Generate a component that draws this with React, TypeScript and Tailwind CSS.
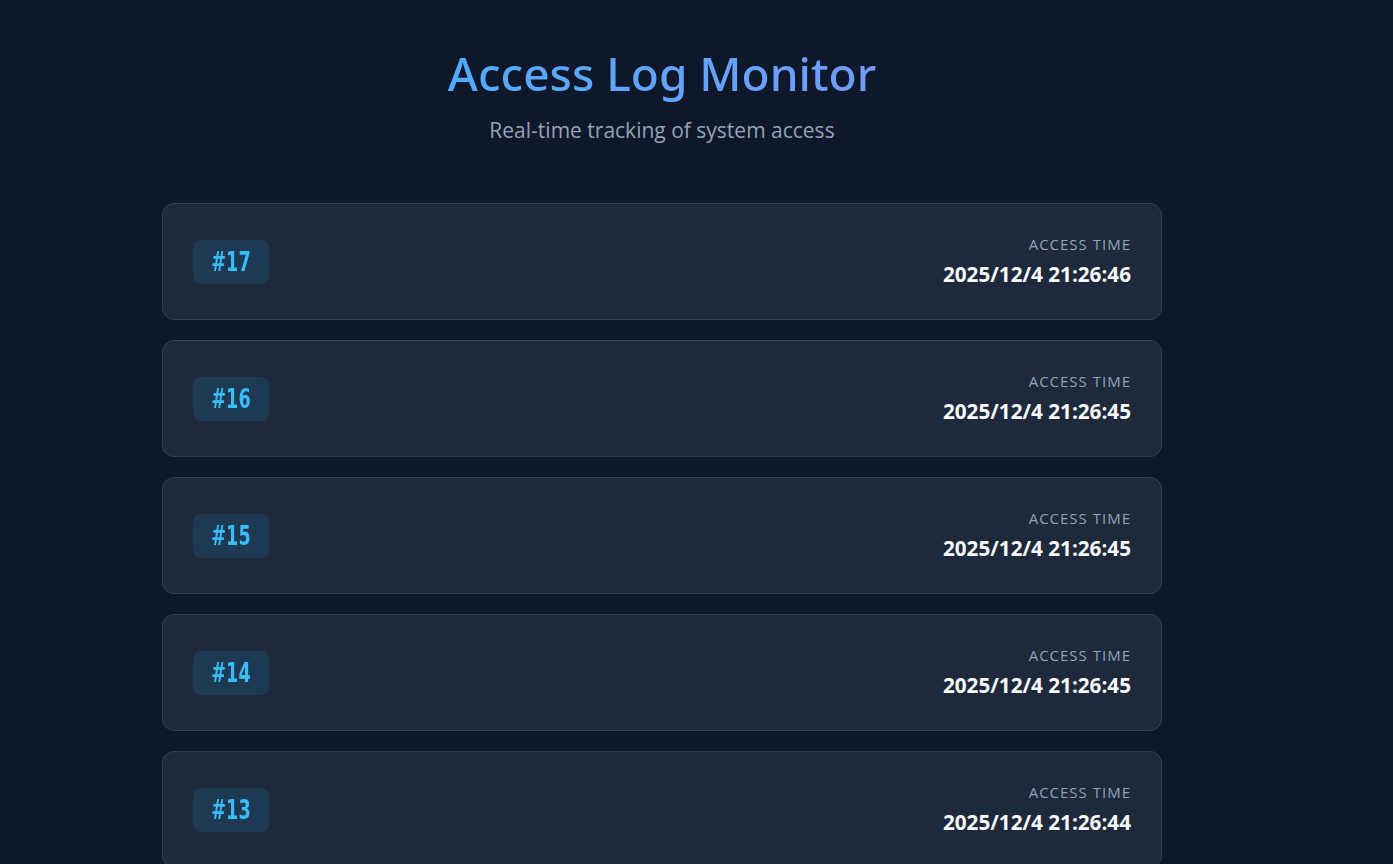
const logs = [
  { id: 17, time: "2025/12/4 21:26:46" },
  { id: 16, time: "2025/12/4 21:26:45" },
  { id: 15, time: "2025/12/4 21:26:45" },
  { id: 14, time: "2025/12/4 21:26:45" },
  { id: 13, time: "2025/12/4 21:26:44" },
  { id: 12, time: "2025/12/4 21:26:44" },
]

function LogCard({ id, time }: { id: number; time: string }) {
  return (
    <div className="flex items-center justify-between rounded-xl border border-[#334155] bg-[#1e293b] p-[30px]">
      <div className="w-[76px] rounded-lg bg-[#1e3a52] py-[7px] text-center text-[26px] leading-[30px] font-bold text-[#38bdf8] font-['DejaVu_Sans',sans-serif]">
        <span className="inline-block scale-x-[0.68]">#{id}</span>
      </div>
      <div className="text-right">
        <div className="mb-[5px] text-[15px] leading-5 tracking-[1px] text-[#94a3b8] uppercase">Access Time</div>
        <div className="text-[20.7px] leading-[30px] font-bold text-[#f8fafc]">{time}</div>
      </div>
    </div>
  )
}

export default function App() {
  return (
    <main className="min-h-screen bg-[#0f172a] font-['Open_Sans','Noto_Sans',sans-serif] pt-[40px] pb-10">
      <div className="pl-[162px]">
        <div className="w-[1000px]">
          <div className="text-center">
            <h1 className="inline-block bg-gradient-to-r from-[#4facfe] to-[#6f9cf7] bg-clip-text text-[46px] leading-[66px] font-medium text-transparent font-['Noto_Sans',sans-serif]">
              Access Log Monitor
            </h1>
            <p className="mt-[9px] text-[21px] leading-[30px] text-[#94a3b8]">Real-time tracking of system access</p>
          </div>
          <div className="mt-[58px] flex flex-col gap-5">
            {logs.map((log) => (
              <LogCard key={log.id} id={log.id} time={log.time} />
            ))}
          </div>
        </div>
      </div>
    </main>
  )
}
